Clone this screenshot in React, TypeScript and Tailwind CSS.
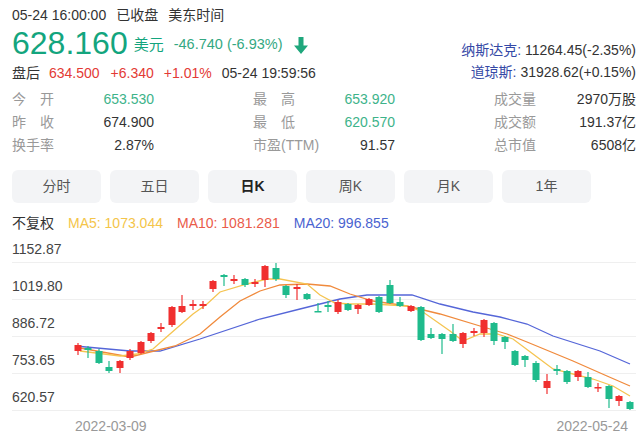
import React from "react";

type C = [number, number, number, number, number, "r" | "g"];

const candles: C[] = [
  [78, 346, 352, 344, 356, "r"],
  [88, 349, 351, 347, 359, "g"],
  [99, 352, 364, 350, 365, "g"],
  [109, 368, 372, 362, 374, "g"],
  [120, 362, 369, 361, 374, "r"],
  [130, 352, 359, 350, 361, "r"],
  [141, 343, 354, 342, 355, "r"],
  [151, 334, 342, 333, 344, "r"],
  [161, 328, 330, 324, 333, "r"],
  [172, 308, 326, 307, 328, "r"],
  [182, 307, 313, 296, 314, "r"],
  [193, 305, 307, 301, 311, "r"],
  [203, 305, 307, 302, 310, "r"],
  [213, 282, 290, 281, 293, "r"],
  [224, 276, 278, 275, 287, "g"],
  [234, 280, 282, 276, 285, "r"],
  [245, 280, 286, 279, 288, "g"],
  [255, 283, 285, 280, 288, "r"],
  [265, 267, 281, 266, 288, "r"],
  [276, 269, 280, 264, 282, "g"],
  [286, 287, 296, 286, 299, "g"],
  [297, 288, 290, 285, 301, "r"],
  [307, 295, 300, 294, 301, "g"],
  [318, 312, 313, 304, 313, "g"],
  [328, 306, 308, 302, 313, "g"],
  [338, 303, 313, 301, 315, "r"],
  [348, 305, 311, 304, 312, "g"],
  [358, 306, 310, 305, 315, "r"],
  [369, 300, 306, 299, 307, "r"],
  [379, 298, 313, 297, 314, "g"],
  [390, 286, 304, 281, 305, "g"],
  [400, 303, 307, 298, 308, "g"],
  [411, 307, 312, 306, 313, "r"],
  [421, 308, 341, 307, 342, "g"],
  [431, 335, 339, 329, 340, "g"],
  [442, 335, 340, 334, 355, "g"],
  [453, 335, 342, 325, 343, "g"],
  [463, 334, 345, 333, 349, "r"],
  [474, 332, 334, 329, 337, "r"],
  [484, 321, 334, 320, 338, "r"],
  [494, 324, 342, 323, 346, "g"],
  [505, 338, 343, 337, 350, "g"],
  [515, 352, 366, 351, 367, "g"],
  [525, 357, 361, 356, 368, "g"],
  [536, 364, 381, 362, 383, "g"],
  [547, 382, 389, 375, 395, "r"],
  [557, 370, 372, 366, 376, "g"],
  [567, 372, 383, 371, 385, "g"],
  [578, 372, 378, 371, 382, "r"],
  [588, 378, 388, 373, 389, "g"],
  [598, 388, 389, 384, 393, "r"],
  [609, 387, 400, 386, 409, "g"],
  [619, 397, 402, 396, 407, "r"],
  [630, 403, 410, 402, 411, "g"],
];

const ma20 =
  "75,347 130,352 160,352 200,340 260,320 300,310 340,300 367,296 412,296 440,305 473,313 500,318 527,325 553,337 600,352 630,365";
const ma10 =
  "80,349 130,358 150,353 175,347 200,335 220,318 240,302 260,292 280,286 307,285 330,287 350,295 373,302 407,307 440,315 480,327 507,335 527,343 573,362 607,377 630,387";
const ma5 =
  "80,352 120,357 137,355 153,350 170,335 193,315 207,305 220,293 247,285 267,280 280,280 307,285 320,296 335,304 350,305 373,305 407,307 423,313 450,332 463,342 480,335 497,335 513,340 533,355 553,370 573,375 593,380 613,387 630,397";

function Label2({ a, b }: { a: string; b: string }) {
  return (
    <span className="flex w-[42px] justify-between">
      <span>{a}</span>
      <span>{b}</span>
    </span>
  );
}

function Stat({ label, value, green }: { label: React.ReactNode; value: string; green?: boolean }) {
  return (
    <div className="flex w-[142px] items-center justify-between">
      <span className="text-[#999]">{label}</span>
      <span className={green ? "text-[#3db38a]" : "text-[#333]"}>{value}</span>
    </div>
  );
}

const tabs = ["分时", "五日", "日K", "周K", "月K", "1年"];
const axis = ["1152.87", "1019.80", "886.72", "753.65", "620.57"];

export default function App() {
  return (
    <div className="relative h-[440px] w-[640px] overflow-hidden bg-white font-['Liberation_Sans','Noto_Sans_CJK_SC',sans-serif] text-[14px] text-[#333]">
      {/* Header */}
      <div className="flex justify-between pl-[12px] pr-[4px] pt-[5px]">
        <div className="flex flex-col">
          <div className="flex h-[20px] items-center gap-[10px] leading-[20px]">
            <span>05-24 16:00:00</span>
            <span>已收盘</span>
            <span>美东时间</span>
          </div>
          <div className="flex h-[36px] items-center">
            <span className="text-[32px] leading-[36px] text-[#13a57e]">628.160</span>
            <span className="ml-[6px] mt-[4px] text-[15px] text-[#13a57e]">美元</span>
            <span className="ml-[10px] mt-[4px] text-[14.5px] text-[#34a882]">-46.740 (-6.93%)</span>
            <svg className="ml-[11px] mt-[4px]" width="14" height="17" viewBox="0 0 14 17">
              <path d="M4.5 0 H9.5 V8.5 H14 L7 17 L0 8.5 H4.5 Z" fill="#1fa77c" />
            </svg>
          </div>
          <div className="mt-[2px] flex h-[20px] items-center leading-[20px]">
            <span>盘后</span>
            <span className="ml-[9px] text-[#e33a35]">634.500</span>
            <span className="ml-[11px] text-[#e33a35]">+6.340</span>
            <span className="ml-[10px] text-[#e33a35]">+1.01%</span>
            <span className="ml-[10px]">05-24 19:59:56</span>
          </div>
        </div>
        <div className="flex flex-col items-end pt-[34px] text-[14px]">
          <div className="h-[22px] leading-[22px]">
            <span className="text-[#3549a6]">纳斯达克:</span>
            <span className="text-[#333]"> 11264.45(-2.35%)</span>
          </div>
          <div className="h-[22px] leading-[22px]">
            <span className="text-[#3549a6]">道琼斯:</span>
            <span className="text-[#333]"> 31928.62(+0.15%)</span>
          </div>
        </div>
      </div>

      {/* Stats */}
      <div className="mt-[5px] grid grid-cols-[241px_241px_142px] grid-rows-[23px_23px_23px] items-center pl-[12px]">
        <Stat label={<Label2 a="今" b="开" />} value="653.530" green />
        <Stat label={<Label2 a="最" b="高" />} value="653.920" green />
        <Stat label="成交量" value="2970万股" />
        <Stat label={<Label2 a="昨" b="收" />} value="674.900" />
        <Stat label={<Label2 a="最" b="低" />} value="620.570" green />
        <Stat label="成交额" value="191.37亿" />
        <Stat label="换手率" value="2.87%" />
        <Stat label="市盈(TTM)" value="91.57" />
        <Stat label="总市值" value="6508亿" />
      </div>

      {/* Tabs */}
      <div className="mt-[13px] flex gap-[9px] pl-[12px]">
        {tabs.map((t) => (
          <div
            key={t}
            className={
              t === "日K"
                ? "flex h-[33px] w-[89px] items-center justify-center rounded-[6px] bg-[#f3f4f6] font-bold text-[#222]"
                : "flex h-[33px] w-[89px] items-center justify-center rounded-[6px] bg-[#f3f4f6] text-[#555]"
            }
          >
            {t}
          </div>
        ))}
      </div>

      {/* Legend */}
      <div className="mt-[10px] flex h-[20px] items-center gap-[14px] pl-[12px] leading-[20px]">
        <span className="text-[#333]">不复权</span>
        <span className="text-[#f4c54a]">MA5: 1073.044</span>
        <span className="text-[#ea5b4a]">MA10: 1081.281</span>
        <span className="text-[#4a63d0]">MA20: 996.855</span>
      </div>

      {/* Chart */}
      <div className="relative">
        <div className="flex flex-col pl-[12px] pr-[4px]">
          {axis.map((a, i) => (
            <div
              key={a}
              className={
                i === 0
                  ? "flex h-[30px] items-end border-b border-[#efefef] pb-[5px] leading-[16px] text-[#444]"
                  : "flex h-[37px] items-end border-b border-[#efefef] pb-[5px] leading-[16px] text-[#444]"
              }
            >
              {a}
            </div>
          ))}
        </div>
        <svg
          className="absolute left-0 top-0"
          width="640"
          height="178"
          viewBox="0 234 640 178"
        >
          <polyline points={ma20} fill="none" stroke="#5566d8" strokeWidth="1.3" />
          <polyline points={ma10} fill="none" stroke="#f08a3c" strokeWidth="1.3" />
          <polyline points={ma5} fill="none" stroke="#f5c451" strokeWidth="1.3" />
          {candles.map(([x, t, b, wt, wb, c], i) => {
            const col = c === "r" ? "#f02f2f" : "#1fbb8c";
            const h = Math.max(b - t, 1.5);
            return (
              <g key={i}>
                <line x1={x} x2={x} y1={wt} y2={wb} stroke={col} strokeWidth="1.2" />
                <rect x={x - 3.5} y={t} width={7} height={h} fill={col} />
              </g>
            );
          })}
        </svg>
      </div>

      {/* Dates */}
      <div className="mt-[5px] flex h-[20px] justify-between pl-[75px] pr-[12px] leading-[20px] text-[#999]">
        <span>2022-03-09</span>
        <span>2022-05-24</span>
      </div>
    </div>
  );
}
